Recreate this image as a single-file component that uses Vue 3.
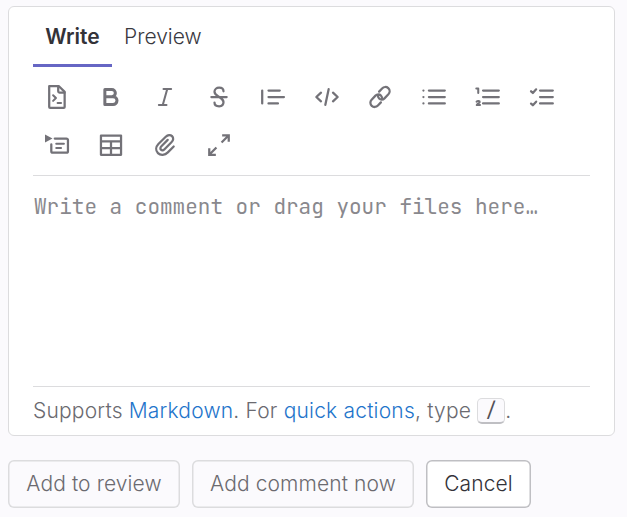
<script setup>
const tools = [
  { name: 'Insert suggestion', paths: ['M2.8 .8h6.5L13.1 4.6V14.6a.6.6 0 0 1-.6.6h-9.1a.6.6 0 0 1-.6-.6Z', 'M8.8 .8v3.4c0 .6.3.9.9.9H13'], thin: ['M5.4 6.8 7.3 8.7 5.4 10.6M8.4 12h2.3'] },
  { name: 'Bold', bold: true, paths: ['M3.9 3h4.6a2.35 2.35 0 0 1 0 4.8H3.9ZM3.9 7.8h5.5a2.55 2.55 0 0 1 0 5.2H3.9Z'] },
  { name: 'Italic', thin: ['M7 2.7h5.1M3.9 13.3H9M9.5 2.7 6.5 13.3'] },
  { name: 'Strikethrough', paths: ['M2.9 8h10.2M11 4.2C11 2.6 9.8 1.8 8.1 1.8S5 2.8 5 4.5C5 6.3 6.5 7 8.1 8s2.9 1.7 2.9 3.4c0 1.7-1.2 2.8-2.9 2.8S5 13.3 5 11.7'] },
  { name: 'Quote', paths: ['M.8 3.7v8.6M5 3.7h7.5M5 8h10.3M5 12.3h6.3'] },
  { name: 'Code', paths: ['M4 5.1.9 8 4 10.9M12 5.1 15.1 8 12 10.9M9.1 2.8 6.9 13.2'] },
  { name: 'Link', paths: ['M7.4 4.4l2-2.1c1.1-1.2 2.9-1.3 4.1-.2s1.2 2.9.1 4.1L11 8.9c-1.1 1.1-2.7 1-3.6.1-.7-.7-.9-1.5-.6-2.4M8.6 11.6l-2 2.1c-1.1 1.2-2.9 1.3-4.1.2s-1.2-2.9-.1-4.1L5 7.1c1.1-1.1 2.7-1 3.6-.1.7.7.9 1.5.6 2.4'] },
  { name: 'Bullet list', paths: ['M4.6 3.7h10.6M4.6 8h10.6M4.6 12.3h10.6M.95 3.7h.01M.95 8h.01M.95 12.3h.01'] },
  { name: 'Numbered list', paths: ['M4.7 3.7h10.5M4.7 8h10.5M4.7 12.3h10.5'], thin: ['M.2 2.3h1.3v3.1M.4 11.1c.6-.7 2.1-.6 2.1.2 0 .7-1.4 1.1-2 2.1h2.2'] },
  { name: 'Task list', paths: ['M6.7 3.7h8.5M6.7 8h8.5M6.7 12.3h8.5M.7 4.2 1.9 5.3 4.1 2.9M.7 12.4 1.9 13.5 4.1 11.1'] },
  { name: 'Collapsible section', fills: ['M0 1 5 3.6 0 6.3Z'], paths: ['M6.5 3.7h7.8a1 1 0 0 1 1 1v7.4a1 1 0 0 1-1 1H5.2a1 1 0 0 1-1-1V7.5'], thin: ['M7.5 7.2h5.1M7.5 10h3.2'] },
  { name: 'Table', paths: ['M1.3 1.7h13.4v12.8H1.3ZM1.3 5.5h13.4M1.3 10h13.4M8 5.5v9'] },
  { name: 'Attach file', paths: ['M13.8 9l-3.9 3.9c-2 2-4.9 2.2-6.6.5s-1.5-4.2.3-6.1l4.9-4.8c1.4-1.4 3.1-1.5 4.2-.4s1 2.8-.4 4.1l-4.6 4.6c-.8.8-1.8.9-2.4.3s-.5-1.5.3-2.3l4.2-4.2'] },
  { name: 'Full screen', paths: ['M10.1 1.5h4.4v4.4M5.9 14.5H1.5v-4.4M14.2 1.8 9.7 6.3M1.8 14.2 6.3 9.7'], square: true }
]
</script>

<template>
  <main class="page">
    <section class="editor">
      <nav class="tabs">
        <button class="tab active">Write</button>
        <button class="tab">Preview</button>
      </nav>
      <div class="toolbar">
        <button v-for="tool in tools" :key="tool.name" class="tool" :aria-label="tool.name">
          <svg viewBox="0 0 16 16" class="icon" :class="{ heavy: tool.bold, square: tool.square }">
            <path v-for="d in tool.paths" :key="d" :d="d" />
            <path v-for="d in tool.thin" :key="d" :d="d" class="thin" />
            <path v-for="d in tool.fills" :key="d" :d="d" class="solid" />
          </svg>
        </button>
      </div>
      <textarea class="comment" placeholder="Write a comment or drag your files here…"></textarea>
      <footer class="help">Supports <a>Markdown</a>. For <a>quick actions</a>, type <kbd>/</kbd>.</footer>
    </section>
    <div class="actions">
      <button class="action review" disabled>Add to review</button>
      <button class="action now" disabled>Add comment now</button>
      <button class="action cancel">Cancel</button>
    </div>
  </main>
</template>

<style>
body {
  background: #fbfafd;
  overflow: hidden;
}
</style>

<style scoped>
* {
  box-sizing: border-box;
}
.page {
  padding: 6px 12px 0 8px;
  font-family: Inter, sans-serif;
  font-size: 21px;
  font-weight: 350;
  color: #333238;
}
button {
  font: inherit;
  margin: 0;
  padding: 0;
  border: 0;
  background: transparent;
  color: inherit;
}
.editor {
  height: 430px;
  padding: 0 24px;
  border: 1px solid #dcdcde;
  border-radius: 6px;
  background: #fff;
  display: flex;
  flex-direction: column;
}
.tabs {
  display: flex;
  height: 60px;
}
.tab {
  padding: 0 12px;
  height: 60px;
  line-height: 60px;
  color: #3a393f;
}
.active {
  width: 79px;
  font-weight: 600;
  color: #333238;
  box-shadow: inset 0 -3px #6666c4;
}
.toolbar {
  display: grid;
  grid-template-columns: repeat(10, 48px);
  grid-auto-rows: 48px;
  column-gap: 5.91px;
  height: 109px;
  padding-top: 6px;
  border-bottom: 1px solid #dcdcde;
}
.tool {
  display: flex;
  align-items: center;
  justify-content: center;
}
.icon {
  width: 24px;
  height: 24px;
  overflow: visible;
  fill: none;
  stroke: #737278;
  stroke-width: 1.5;
  stroke-linecap: round;
  stroke-linejoin: round;
}
.thin {
  stroke-width: 1.35;
}
.heavy {
  stroke-width: 2;
}
.square {
  stroke-linecap: butt;
  stroke-linejoin: miter;
}
.solid {
  fill: #737278;
  stroke: none;
}
.comment {
  display: block;
  width: 100%;
  height: 210px;
  margin: 0;
  padding: 15px 1px;
  border: 0;
  resize: none;
  outline: none;
  background: transparent;
  font: 21px/32px "JetBrains Mono", "DejaVu Sans Mono", monospace;
}
.comment::placeholder {
  color: #89888d;
  opacity: 1;
}
.help {
  display: flex;
  align-items: center;
  white-space: pre;
  height: 49px;
  padding-bottom: 1px;
  border-top: 1px solid #dcdcde;
  color: #6b6a70;
  letter-spacing: 0.19px;
}
.help a {
  color: #1f75cb;
}
kbd {
  width: 28px;
  height: 26px;
  border: 1px solid #dcdcde;
  border-bottom: 2px solid #bfbfc3;
  border-radius: 5px;
  background: #fbfafd;
  color: #535158;
  font: 19px/24px "JetBrains Mono", "DejaVu Sans Mono", monospace;
  letter-spacing: 0;
  text-align: center;
}
.actions {
  display: flex;
  gap: 12px;
  padding-top: 24px;
}
.action {
  height: 48px;
  padding-bottom: 1px;
  border-radius: 6px;
  box-shadow: inset 0 0 0 1.5px #dcdcde;
  color: #6b6a70;
  letter-spacing: 0.1px;
}
.review {
  width: 172px;
}
.now {
  width: 222px;
}
.cancel {
  width: 105px;
  background: #fff;
  color: #333238;
  box-shadow: inset 0 0 0 1.5px #bfbfc3;
}
</style>
